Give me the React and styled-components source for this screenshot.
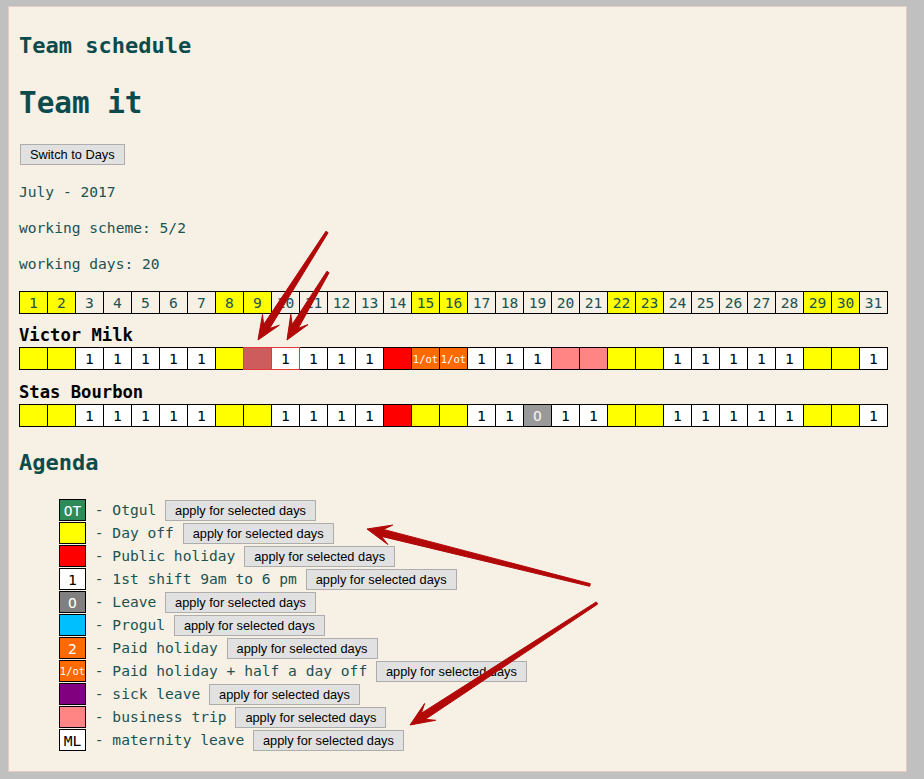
import React from "react";
import styled, { createGlobalStyle } from "styled-components";

const Global = createGlobalStyle`
  html, body { margin: 0; padding: 0; background: #c0c0c0; }
  body { font-family: "DejaVu Sans Mono", "Liberation Mono", monospace; }
`;

const MONO = `"DejaVu Sans Mono", "Liberation Mono", monospace`;
const UI = `"Liberation Sans", Arial, sans-serif`;
const TEAL = "#0c4b4b";
const TEXT = "#1b5252";

const Page = styled.div`
  position: relative;
  width: 924px;
  height: 779px;
  overflow: hidden;
`;

const Panel = styled.div`
  box-sizing: border-box;
  margin: 6px 0 0 8px;
  width: 899px;
  height: 766px;
  background: #f6f0e5;
  border: 1px solid #e4cdc4;
  padding: 0 10px;
  display: flex;
  flex-direction: column;
  align-items: flex-start;
`;

const Title = styled.h2`
  margin: ${(p) => p.$mt}px 0 0;
  font-family: ${MONO};
  font-size: 22px;
  line-height: 28px;
  font-weight: bold;
  color: ${TEAL};
`;

const BigTitle = styled.h1`
  margin: 25px 0 0;
  font-family: ${MONO};
  font-size: 29.3px;
  line-height: 36px;
  font-weight: bold;
  color: ${TEAL};
`;

const Btn = styled.button`
  box-sizing: border-box;
  margin: ${(p) => p.$mt || 0}px 0 0 ${(p) => p.$ml || 0}px;
  height: 21px;
  padding: 0 9px;
  background: #e1e1e1;
  border: 1px solid #adadad;
  border-radius: 0;
  font-family: ${UI};
  font-size: 12.8px;
  line-height: 19px;
  color: #000;
  white-space: nowrap;
  flex: none;
`;

const Info = styled.p`
  margin: ${(p) => p.$mt}px 0 0;
  font-family: ${MONO};
  font-size: 14.6px;
  line-height: 20px;
  color: ${TEXT};
`;

const Row = styled.div`
  display: flex;
  margin-top: ${(p) => p.$mt}px;
`;

const Cell = styled.div`
  box-sizing: border-box;
  width: 29px;
  height: 23px;
  margin-left: -1px;
  &:first-child { margin-left: 0; }
  border: 1px solid ${(p) => (p.$sel ? "#e23a3a" : "#000")};
  background: ${(p) => p.$bg || "transparent"};
  color: ${(p) => p.$fg || "#000"};
  font-family: ${MONO};
  font-size: ${(p) => (p.$small ? "10.5px" : "14.6px")};
  display: flex;
  align-items: center;
  justify-content: center;
  white-space: nowrap;
  ${(p) => (p.$sel ? "position: relative; z-index: 1;" : "")}
`;

const Name = styled.h3`
  margin: ${(p) => p.$mt}px 0 0;
  font-family: ${MONO};
  font-size: 17.2px;
  line-height: 21px;
  font-weight: bold;
  color: #000;
`;

const Legend = styled.ul`
  list-style: none;
  margin: 22px 0 0;
  padding: 0 0 0 40px;
`;

const Item = styled.li`
  display: flex;
  align-items: center;
  height: 22px;
  margin-bottom: 1px;
`;

const Swatch = styled.span`
  box-sizing: border-box;
  width: 27px;
  height: 22px;
  flex: none;
  border: 1px solid #000;
  background: ${(p) => p.$bg};
  color: ${(p) => p.$fg || "#fff"};
  font-family: ${MONO};
  font-size: ${(p) => (p.$small ? "10.5px" : "14.6px")};
  display: flex;
  align-items: center;
  justify-content: center;
`;

const Label = styled.span`
  margin: 0 8.8px;
  font-family: ${MONO};
  font-size: 14.6px;
  line-height: 22px;
  color: ${TEXT};
  white-space: pre;
`;

const Overlay = styled.svg`
  position: absolute;
  left: 0;
  top: 0;
  pointer-events: none;
`;

const weekends = [1, 2, 8, 9, 15, 16, 22, 23, 29, 30];
const YEL = "#ffff00";

const K = {
  Y: { bg: YEL },
  W: { bg: "#fff", text: "1" },
  R: { bg: "#ff0000" },
  H: { bg: "#ff6a00", text: "1/ot", fg: "#fff", small: true },
  P: { bg: "#ff8585" },
  S: { bg: "#cd5c5c", sel: true },
  WS: { bg: "#fff", text: "1", sel: true },
  O: { bg: "#999999", text: "O", fg: "#f2f2f2" },
};

const victor = "Y Y W W W W W Y S WS W W W R H H W W W P P Y Y W W W W W Y Y W".split(" ");
const stas = "Y Y W W W W W Y Y W W W W R Y Y W W O W W Y Y W W W W W Y Y W".split(" ");

const legend = [
  { bg: "#2e8b57", text: "OT", label: "- Otgul" },
  { bg: YEL, label: "- Day off" },
  { bg: "#ff0000", label: "- Public holiday" },
  { bg: "#fff", text: "1", fg: "#000", label: "- 1st shift 9am to 6 pm" },
  { bg: "#808080", text: "O", label: "- Leave" },
  { bg: "#00bfff", label: "- Progul" },
  { bg: "#ff6a00", text: "2", label: "- Paid holiday" },
  { bg: "#ff6a00", text: "1/ot", small: true, label: "- Paid holiday + half a day off" },
  { bg: "#800080", label: "- sick leave" },
  { bg: "#ff8585", label: "- business trip" },
  { bg: "#fff", text: "ML", fg: "#000", label: "- maternity leave" },
];

function arrowPoints(tx, ty, px, py, o = {}) {
  const { w0 = 1.3, w1 = 3.6, L = 22, H = 10 } = o;
  const dx = px - tx, dy = py - ty;
  const len = Math.hypot(dx, dy);
  const ux = dx / len, uy = dy / len;
  const nx = -uy, ny = ux;
  const neck = [px - ux * (L - 6), py - uy * (L - 6)];
  const base = [px - ux * (L + 2), py - uy * (L + 2)];
  const pts = [
    [tx + nx * w0, ty + ny * w0],
    [neck[0] + nx * w1, neck[1] + ny * w1],
    [base[0] + nx * H, base[1] + ny * H],
    [px, py],
    [base[0] - nx * H, base[1] - ny * H],
    [neck[0] - nx * w1, neck[1] - ny * w1],
    [tx - nx * w0, ty - ny * w0],
  ];
  return pts.map((p) => p.map((v) => v.toFixed(1)).join(",")).join(" ");
}

const arrows = [
  [327, 232, 258, 340],
  [328, 272, 287, 340],
  [590, 585, 367, 529],
  [597, 603, 410, 725],
];

function ScheduleRow({ data, mt }) {
  return (
    <Row $mt={mt}>
      {data.map((k, i) => {
        const c = K[k];
        return (
          <Cell key={i} $bg={c.bg} $fg={c.fg} $small={c.small} $sel={c.sel}>
            {c.text || ""}
          </Cell>
        );
      })}
    </Row>
  );
}

export default function App() {
  const days = Array.from({ length: 31 }, (_, i) => i + 1);
  return (
    <Page>
      <Global />
      <Panel>
        <Title $mt={25}>Team schedule</Title>
        <BigTitle>Team it</BigTitle>
        <Btn $mt={23} $ml={1}>Switch to Days</Btn>
        <Info $mt={17}>July - 2017</Info>
        <Info $mt={16}>working scheme: 5/2</Info>
        <Info $mt={16}>working days: 20</Info>
        <Row $mt={17}>
          {days.map((d) => (
            <Cell key={d} $bg={weekends.includes(d) ? YEL : "transparent"} $fg={TEXT}>
              {d}
            </Cell>
          ))}
        </Row>
        <Name $mt={11}>Victor Milk</Name>
        <ScheduleRow data={victor} mt={1} />
        <Name $mt={12}>Stas Bourbon</Name>
        <ScheduleRow data={stas} mt={1} />
        <Title $mt={22}>Agenda</Title>
        <Legend>
          {legend.map((l, i) => (
            <Item key={i}>
              <Swatch $bg={l.bg} $fg={l.fg} $small={l.small}>
                {l.text || ""}
              </Swatch>
              <Label>{l.label}</Label>
              <Btn>apply for selected days</Btn>
            </Item>
          ))}
        </Legend>
      </Panel>
      <Overlay width="924" height="779" viewBox="0 0 924 779">
        {arrows.map((a, i) => (
          <polygon key={i} points={arrowPoints(...a)} fill="#b20808" stroke="#b20808" strokeWidth="1" strokeLinejoin="round" />
        ))}
      </Overlay>
    </Page>
  );
}
